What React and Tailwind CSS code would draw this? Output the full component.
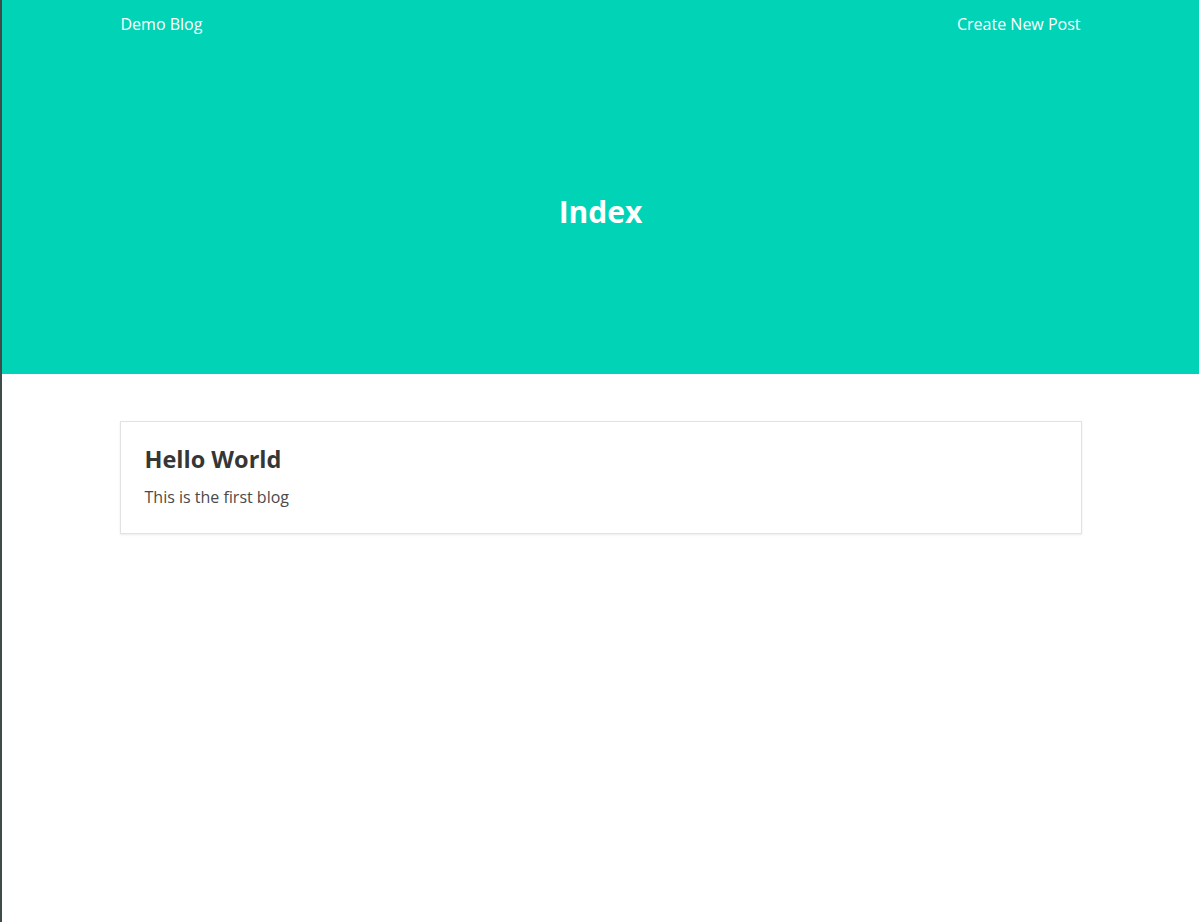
export default function App() {
  return (
    <div className="flex min-h-[922px] w-full" style={{ fontFamily: '"Open Sans", "Noto Sans", sans-serif' }}>
      <div className="w-[2px] shrink-0 bg-[#3e4c4a]" />
      <div className="flex-1 bg-white">
        <div className="flex h-[374px] flex-col bg-[#00d3b6]">
          <nav className="mx-auto flex h-12 w-[962px] items-center justify-between px-px text-[16px] text-white">
            <span>Demo Blog</span>
            <span>Create New Post</span>
          </nav>
          <div className="flex flex-1 items-center justify-center pt-[1px]">
            <h1 className="text-[30px] font-bold text-white">Index</h1>
          </div>
        </div>
        <div className="mx-auto mt-[47px] w-[962px] border border-[#e2e2e2] bg-white px-6 pt-6 pb-6 shadow-[0_1px_2px_rgba(0,0,0,0.08)]">
          <h2 className="text-[23.5px] font-bold leading-[27px] text-[#363636]">Hello World</h2>
          <p className="mt-3 text-[16px] leading-6 text-[#4a4a4a]">This is the first blog</p>
        </div>
      </div>
    </div>
  );
}
